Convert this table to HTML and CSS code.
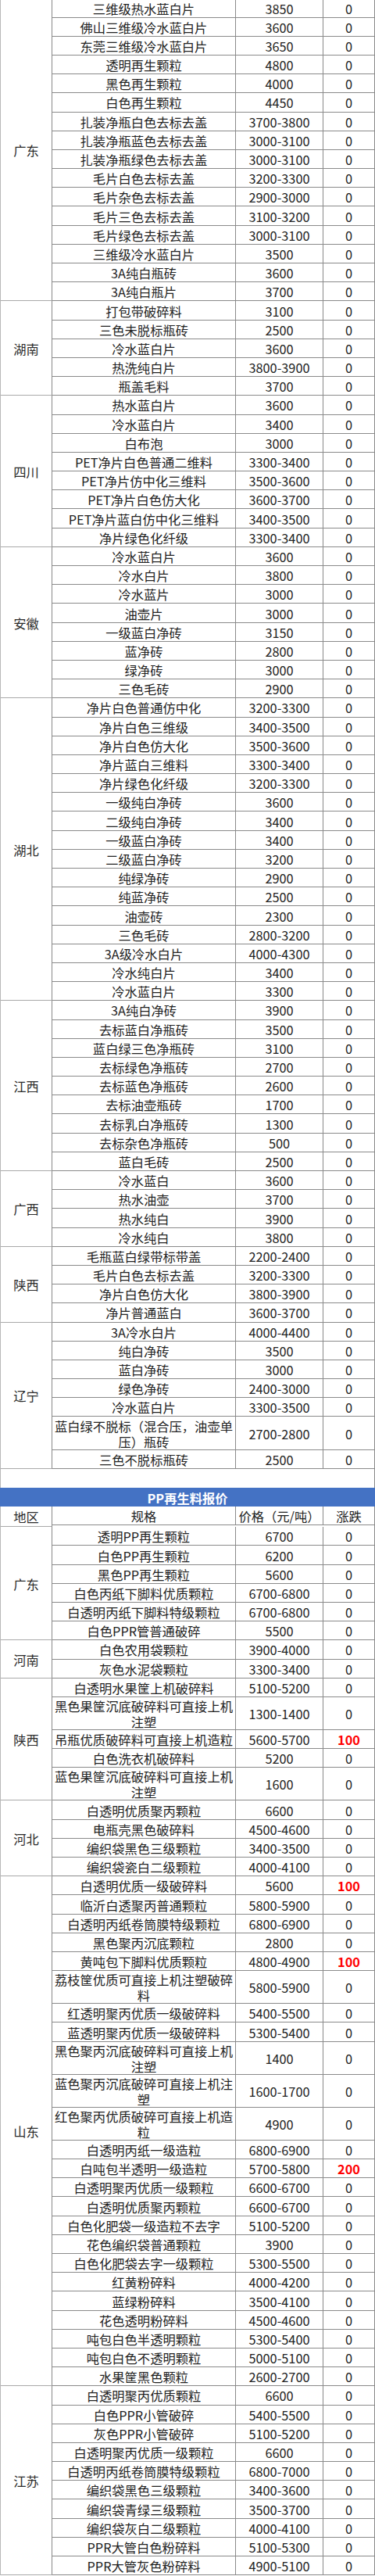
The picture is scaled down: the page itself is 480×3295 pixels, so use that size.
FILE: index.html
```html
<!DOCTYPE html>
<html lang="zh-CN">
<head>
<meta charset="utf-8">
<title>再生料报价</title>
<link rel="stylesheet" href="styles.css">
</head>
<body>
<div class="sheet first">
  <div class="g"><div class="reg">广东</div><div class="rows">
    <div class="r"><span>三维级热水蓝白片</span><span>3850</span><span>0</span></div>
    <div class="r"><span>佛山三维级冷水蓝白片</span><span>3600</span><span>0</span></div>
    <div class="r"><span>东莞三维级冷水蓝白片</span><span>3650</span><span>0</span></div>
    <div class="r"><span>透明再生颗粒</span><span>4800</span><span>0</span></div>
    <div class="r"><span>黑色再生颗粒</span><span>4000</span><span>0</span></div>
    <div class="r"><span>白色再生颗粒</span><span>4450</span><span>0</span></div>
    <div class="r"><span>扎装净瓶白色去标去盖</span><span>3700-3800</span><span>0</span></div>
    <div class="r"><span>扎装净瓶蓝色去标去盖</span><span>3000-3100</span><span>0</span></div>
    <div class="r"><span>扎装净瓶绿色去标去盖</span><span>3000-3100</span><span>0</span></div>
    <div class="r"><span>毛片白色去标去盖</span><span>3200-3300</span><span>0</span></div>
    <div class="r"><span>毛片杂色去标去盖</span><span>2900-3000</span><span>0</span></div>
    <div class="r"><span>毛片三色去标去盖</span><span>3100-3200</span><span>0</span></div>
    <div class="r"><span>毛片绿色去标去盖</span><span>3000-3100</span><span>0</span></div>
    <div class="r"><span>三维级冷水蓝白片</span><span>3500</span><span>0</span></div>
    <div class="r"><span>3A纯白瓶砖</span><span>3600</span><span>0</span></div>
    <div class="r"><span>3A纯白瓶片</span><span>3700</span><span>0</span></div>
  </div></div>
  <div class="g"><div class="reg">湖南</div><div class="rows">
    <div class="r"><span>打包带破碎料</span><span>3100</span><span>0</span></div>
    <div class="r"><span>三色未脱标瓶砖</span><span>2500</span><span>0</span></div>
    <div class="r"><span>冷水蓝白片</span><span>3600</span><span>0</span></div>
    <div class="r"><span>热洗纯白片</span><span>3800-3900</span><span>0</span></div>
    <div class="r"><span>瓶盖毛料</span><span>3700</span><span>0</span></div>
  </div></div>
  <div class="g"><div class="reg">四川</div><div class="rows">
    <div class="r"><span>热水蓝白片</span><span>3600</span><span>0</span></div>
    <div class="r"><span>冷水蓝白片</span><span>3400</span><span>0</span></div>
    <div class="r"><span>白布泡</span><span>3000</span><span>0</span></div>
    <div class="r"><span>PET净片白色普通二维料</span><span>3300-3400</span><span>0</span></div>
    <div class="r"><span>PET净片仿中化三维料</span><span>3500-3600</span><span>0</span></div>
    <div class="r"><span>PET净片白色仿大化</span><span>3600-3700</span><span>0</span></div>
    <div class="r"><span>PET净片蓝白仿中化三维料</span><span>3400-3500</span><span>0</span></div>
    <div class="r"><span>净片绿色化纤级</span><span>3300-3400</span><span>0</span></div>
  </div></div>
  <div class="g"><div class="reg">安徽</div><div class="rows">
    <div class="r"><span>冷水蓝白片</span><span>3600</span><span>0</span></div>
    <div class="r"><span>冷水白片</span><span>3800</span><span>0</span></div>
    <div class="r"><span>冷水蓝片</span><span>3000</span><span>0</span></div>
    <div class="r"><span>油壶片</span><span>3000</span><span>0</span></div>
    <div class="r"><span>一级蓝白净砖</span><span>3150</span><span>0</span></div>
    <div class="r"><span>蓝净砖</span><span>2800</span><span>0</span></div>
    <div class="r"><span>绿净砖</span><span>3000</span><span>0</span></div>
    <div class="r"><span>三色毛砖</span><span>2900</span><span>0</span></div>
  </div></div>
  <div class="g"><div class="reg">湖北</div><div class="rows">
    <div class="r"><span>净片白色普通仿中化</span><span>3200-3300</span><span>0</span></div>
    <div class="r"><span>净片白色三维级</span><span>3400-3500</span><span>0</span></div>
    <div class="r"><span>净片白色仿大化</span><span>3500-3600</span><span>0</span></div>
    <div class="r"><span>净片蓝白三维料</span><span>3300-3400</span><span>0</span></div>
    <div class="r"><span>净片绿色化纤级</span><span>3200-3300</span><span>0</span></div>
    <div class="r"><span>一级纯白净砖</span><span>3600</span><span>0</span></div>
    <div class="r"><span>二级纯白净砖</span><span>3400</span><span>0</span></div>
    <div class="r"><span>一级蓝白净砖</span><span>3400</span><span>0</span></div>
    <div class="r"><span>二级蓝白净砖</span><span>3200</span><span>0</span></div>
    <div class="r"><span>纯绿净砖</span><span>2900</span><span>0</span></div>
    <div class="r"><span>纯蓝净砖</span><span>2500</span><span>0</span></div>
    <div class="r"><span>油壶砖</span><span>2300</span><span>0</span></div>
    <div class="r"><span>三色毛砖</span><span>2800-3200</span><span>0</span></div>
    <div class="r"><span>3A级冷水白片</span><span>4000-4300</span><span>0</span></div>
    <div class="r"><span>冷水纯白片</span><span>3400</span><span>0</span></div>
    <div class="r"><span>冷水蓝白片</span><span>3300</span><span>0</span></div>
  </div></div>
  <div class="g"><div class="reg">江西</div><div class="rows">
    <div class="r"><span>3A纯白净砖</span><span>3900</span><span>0</span></div>
    <div class="r"><span>去标蓝白净瓶砖</span><span>3500</span><span>0</span></div>
    <div class="r"><span>蓝白绿三色净瓶砖</span><span>3100</span><span>0</span></div>
    <div class="r"><span>去标绿色净瓶砖</span><span>2700</span><span>0</span></div>
    <div class="r"><span>去标蓝色净瓶砖</span><span>2600</span><span>0</span></div>
    <div class="r"><span>去标油壶瓶砖</span><span>1700</span><span>0</span></div>
    <div class="r"><span>去标乳白净瓶砖</span><span>1300</span><span>0</span></div>
    <div class="r"><span>去标杂色净瓶砖</span><span>500</span><span>0</span></div>
    <div class="r"><span>蓝白毛砖</span><span>2500</span><span>0</span></div>
  </div></div>
  <div class="g"><div class="reg">广西</div><div class="rows">
    <div class="r"><span>冷水蓝白</span><span>3600</span><span>0</span></div>
    <div class="r"><span>热水油壶</span><span>3700</span><span>0</span></div>
    <div class="r"><span>热水纯白</span><span>3900</span><span>0</span></div>
    <div class="r"><span>冷水纯白</span><span>3800</span><span>0</span></div>
  </div></div>
  <div class="g"><div class="reg">陕西</div><div class="rows">
    <div class="r"><span>毛瓶蓝白绿带标带盖</span><span>2200-2400</span><span>0</span></div>
    <div class="r"><span>毛片白色去标去盖</span><span>3200-3300</span><span>0</span></div>
    <div class="r"><span>净片白色仿大化</span><span>3800-3900</span><span>0</span></div>
    <div class="r"><span>净片普通蓝白</span><span>3600-3700</span><span>0</span></div>
  </div></div>
  <div class="g"><div class="reg">辽宁</div><div class="rows">
    <div class="r"><span>3A冷水白片</span><span>4000-4400</span><span>0</span></div>
    <div class="r"><span>纯白净砖</span><span>3500</span><span>0</span></div>
    <div class="r"><span>蓝白净砖</span><span>3000</span><span>0</span></div>
    <div class="r"><span>绿色净砖</span><span>2400-3000</span><span>0</span></div>
    <div class="r"><span>冷水蓝白片</span><span>3300-3500</span><span>0</span></div>
    <div class="r d"><span>蓝白绿不脱标（混合压，油壶单<br>压）瓶砖</span><span>2700-2800</span><span>0</span></div>
    <div class="r"><span>三色不脱标瓶砖</span><span>2500</span><span>0</span></div>
  </div></div>
</div>

<div class="gap"></div>
<div class="title">PP再生料报价</div>

<div class="sheet">
  <div class="g"><div class="reg">地区</div><div class="rows">
    <div class="r"><span>规格</span><span>价格（元/吨）</span><span>涨跌</span></div>
  </div></div>
  <div class="g"><div class="reg">广东</div><div class="rows">
    <div class="r"><span>透明PP再生颗粒</span><span>6700</span><span>0</span></div>
    <div class="r"><span>白色PP再生颗粒</span><span>6200</span><span>0</span></div>
    <div class="r"><span>黑色PP再生颗粒</span><span>5600</span><span>0</span></div>
    <div class="r"><span>白色丙纸下脚料优质颗粒</span><span>6700-6800</span><span>0</span></div>
    <div class="r"><span>白透明丙纸下脚料特级颗粒</span><span>6700-6800</span><span>0</span></div>
    <div class="r"><span>白色PPR管普通破碎</span><span>5500</span><span>0</span></div>
  </div></div>
  <div class="g"><div class="reg">河南</div><div class="rows">
    <div class="r"><span>白色农用袋颗粒</span><span>3900-4000</span><span>0</span></div>
    <div class="r"><span>灰色水泥袋颗粒</span><span>3300-3400</span><span>0</span></div>
  </div></div>
  <div class="g"><div class="reg">陕西</div><div class="rows">
    <div class="r"><span>白透明水果筐上机破碎料</span><span>5100-5200</span><span>0</span></div>
    <div class="r d"><span>黑色果筐沉底破碎料可直接上机<br>注塑</span><span>1300-1400</span><span>0</span></div>
    <div class="r"><span>吊瓶优质破碎料可直接上机造粒</span><span>5600-5700</span><span class="up">100</span></div>
    <div class="r"><span>白色洗衣机破碎料</span><span>5200</span><span>0</span></div>
    <div class="r d"><span>蓝色果筐沉底破碎料可直接上机<br>注塑</span><span>1600</span><span>0</span></div>
  </div></div>
  <div class="g"><div class="reg">河北</div><div class="rows">
    <div class="r"><span>白透明优质聚丙颗粒</span><span>6600</span><span>0</span></div>
    <div class="r"><span>电瓶壳黑色破碎料</span><span>4500-4600</span><span>0</span></div>
    <div class="r"><span>编织袋黑色三级颗粒</span><span>3400-3500</span><span>0</span></div>
    <div class="r"><span>编织袋瓷白二级颗粒</span><span>4000-4100</span><span>0</span></div>
  </div></div>
  <div class="g"><div class="reg">山东</div><div class="rows">
    <div class="r"><span>白透明优质一级破碎料</span><span>5600</span><span class="up">100</span></div>
    <div class="r"><span>临沂白透聚丙普通颗粒</span><span>5800-5900</span><span>0</span></div>
    <div class="r"><span>白透明丙纸卷筒膜特级颗粒</span><span>6800-6900</span><span>0</span></div>
    <div class="r"><span>黑色聚丙沉底颗粒</span><span>2800</span><span>0</span></div>
    <div class="r"><span>黄吨包下脚料优质颗粒</span><span>4800-4900</span><span class="up">100</span></div>
    <div class="r d"><span>荔枝筐优质可直接上机注塑破碎<br>料</span><span>5800-5900</span><span>0</span></div>
    <div class="r"><span>红透明聚丙优质一级破碎料</span><span>5400-5500</span><span>0</span></div>
    <div class="r"><span>蓝透明聚丙优质一级破碎料</span><span>5300-5400</span><span>0</span></div>
    <div class="r d"><span>黑色聚丙沉底破碎料可直接上机<br>注塑</span><span>1400</span><span>0</span></div>
    <div class="r d"><span>蓝色聚丙沉底破碎可直接上机注<br>塑</span><span>1600-1700</span><span>0</span></div>
    <div class="r d"><span>红色聚丙优质破碎可直接上机造<br>粒</span><span>4900</span><span>0</span></div>
    <div class="r"><span>白透明丙纸一级造粒</span><span>6800-6900</span><span>0</span></div>
    <div class="r"><span>白吨包半透明一级造粒</span><span>5700-5800</span><span class="up">200</span></div>
    <div class="r"><span>白透明聚丙优质一级颗粒</span><span>6600-6700</span><span>0</span></div>
    <div class="r"><span>白透明优质聚丙颗粒</span><span>6600-6700</span><span>0</span></div>
    <div class="r"><span>白色化肥袋一级造粒不去字</span><span>5100-5200</span><span>0</span></div>
    <div class="r"><span>花色编织袋普通颗粒</span><span>3900</span><span>0</span></div>
    <div class="r"><span>白色化肥袋去字一级颗粒</span><span>5300-5500</span><span>0</span></div>
    <div class="r"><span>红黄粉碎料</span><span>4000-4200</span><span>0</span></div>
    <div class="r"><span>蓝绿粉碎料</span><span>3500-4100</span><span>0</span></div>
    <div class="r"><span>花色透明粉碎料</span><span>4500-4600</span><span>0</span></div>
    <div class="r"><span>吨包白色半透明颗粒</span><span>5300-5400</span><span>0</span></div>
    <div class="r"><span>吨包白色不透明颗粒</span><span>5000-5100</span><span>0</span></div>
    <div class="r"><span>水果筐黑色颗粒</span><span>2600-2700</span><span>0</span></div>
  </div></div>
  <div class="g"><div class="reg">江苏</div><div class="rows">
    <div class="r"><span>白透明聚丙优质颗粒</span><span>6600</span><span>0</span></div>
    <div class="r"><span>白色PPR小管破碎</span><span>5400-5500</span><span>0</span></div>
    <div class="r"><span>灰色PPR小管破碎</span><span>5100-5200</span><span>0</span></div>
    <div class="r"><span>白透明聚丙优质一级颗粒</span><span>6600</span><span>0</span></div>
    <div class="r"><span>白透明丙纸卷筒膜特级颗粒</span><span>6800-7000</span><span>0</span></div>
    <div class="r"><span>编织袋黑色三级颗粒</span><span>3400-3600</span><span>0</span></div>
    <div class="r"><span>编织袋青绿三级颗粒</span><span>3500-3700</span><span>0</span></div>
    <div class="r"><span>编织袋灰白二级颗粒</span><span>4000-4100</span><span>0</span></div>
    <div class="r"><span>PPR大管白色粉碎料</span><span>5100-5300</span><span>0</span></div>
    <div class="r"><span>PPR大管灰色粉碎料</span><span>4900-5100</span><span>0</span></div>
  </div></div>
</div>
</body>
</html>
```

FILE: styles.css
```css
* {
  box-sizing: border-box;
}

html, body {
  margin: 0;
  padding: 0;
  background: #ffffff;
}

body {
  width: 480px;
  font-family: "Noto Sans CJK SC", "Noto Sans", sans-serif;
  font-size: 16.3px;
  color: #222222;
  overflow: hidden;
}

.sheet {
  width: 480px;
  border-left: 1px solid #b8b8b8;
  border-right: 1px solid #8a8a8a;
}

.first {
  margin-top: -1.6px;
}

.g {
  display: flex;
}

.reg {
  width: 66px;
  flex: none;
  display: flex;
  align-items: center;
  justify-content: center;
  border-right: 1px solid #8a8a8a;
  border-bottom: 1px solid #a9a9a9;
  color: #2a2a2a;
  padding-top: 1px;
}

.rows {
  flex: 1;
  min-width: 0;
}

.r {
  display: grid;
  grid-template-columns: 235px 112px 1fr;
  height: 24.2px;
  border-bottom: 1px solid #8a8a8a;
}

.r.d {
  height: 42.1px;
}

.r > span {
  display: flex;
  align-items: center;
  justify-content: center;
  text-align: center;
  white-space: nowrap;
  line-height: 20px;
  padding-top: 1px;
  border-right: 1px solid #8a8a8a;
}

.r > span:last-child {
  border-right: none;
}

.up {
  color: #ff0000;
  font-weight: 700;
}

.gap {
  width: 480px;
  height: 24.3px;
  border-left: 1px solid #b8b8b8;
  border-right: 1px solid #8a8a8a;
}

.title {
  width: 480px;
  height: 24.2px;
  background: #4472c4;
  color: #ffffff;
  font-weight: 700;
  display: flex;
  align-items: center;
  justify-content: center;
  padding-top: 1px;
}
```
